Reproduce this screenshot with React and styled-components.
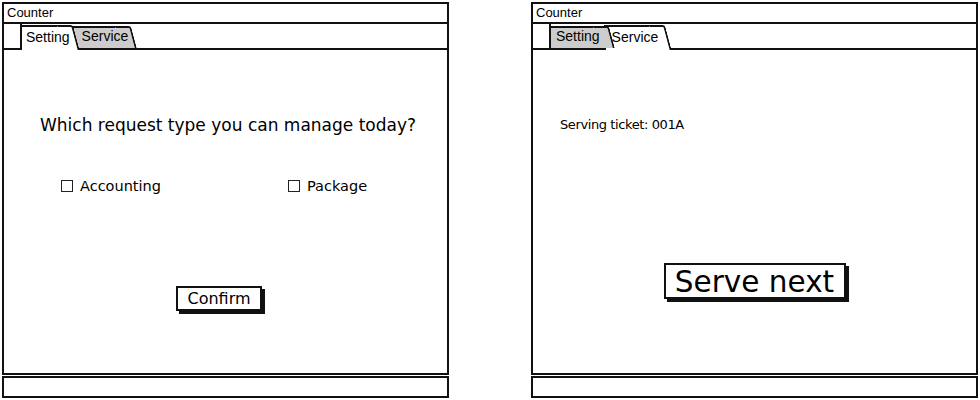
import styled, { createGlobalStyle } from "styled-components";

const GlobalStyle = createGlobalStyle`
  body {
    margin: 0;
    background: #fff;
    font-family: "Liberation Sans", Arial, sans-serif;
  }
`;

const Page = styled.div`
  width: 980px;
  height: 400px;
  box-sizing: border-box;
  padding: 2px 2px 0 2px;
  display: flex;
  justify-content: space-between;
`;

const Window = styled.div`
  width: 447px;
  display: flex;
  flex-direction: column;
`;

const Frame = styled.div`
  height: 373px;
  box-sizing: border-box;
  border: 2px solid #111;
  display: flex;
  flex-direction: column;
`;

const TitleBar = styled.div`
  height: 18px;
  border-bottom: 2px solid #111;
  padding-left: 3px;
  font: 13px/18px "Liberation Sans", Arial, sans-serif;
  color: #000;
`;

const TabStrip = styled.div`
  height: 26px;
  display: flex;
  align-items: flex-end;
  box-shadow: inset 0 -2px 0 #111;
`;

const BlankTab = styled.div`
  width: 16px;
  height: 24px;
  margin-bottom: 2px;
  border-right: 2px solid #111;
  background: #fff;
  position: relative;
  z-index: 5;
`;

const Tab = styled.div`
  position: relative;
  z-index: ${(p) => p.$z};
  box-sizing: border-box;
  height: ${(p) => (p.$active ? 25 : 22)}px;
  margin-bottom: ${(p) => (p.$active ? 0 : 2)}px;
  margin-left: -2px;
  padding: ${(p) => (p.$active ? "2px" : "0")} ${(p) => p.$pr}px 0 ${(p) => p.$pl}px;
  background: ${(p) => (p.$active ? "#fff" : "#cccccc")};
  border-top: 2px solid #111;
  border-left: 2px solid #111;
  font: 14px/17px "Liberation Sans", Arial, sans-serif;
  color: #000;

  &::after {
    content: "";
    position: absolute;
    top: -2px;
    bottom: 0;
    right: -3px;
    width: 14px;
    background: inherit;
    border-top: 2px solid #111;
    border-right: 2px solid #111;
    transform: skewX(15deg);
    transform-origin: top left;
    border-top-right-radius: 3px;
  }

  & > span {
    position: relative;
    z-index: 1;
  }
`;

const Content = styled.div`
  flex: 1;
  display: flex;
  flex-direction: column;
  align-items: ${(p) => (p.$center ? "center" : "flex-start")};
  padding-top: 65px;
  font-family: "DejaVu Sans", sans-serif;
  color: #000;
`;

const Question = styled.div`
  margin-left: 36px;
  font-size: 17px;
  line-height: 20px;
`;

const CheckRow = styled.div`
  margin-top: 41px;
  margin-left: 57px;
  display: grid;
  grid-template-columns: 227px auto;
`;

const Check = styled.label`
  display: flex;
  align-items: center;
  gap: 7px;
  font-size: 14.5px;
  line-height: 20px;
`;

const Box = styled.span`
  width: 10px;
  height: 10px;
  border: 1px solid #222;
  background: #fff;
`;

const Button = styled.button`
  margin-top: ${(p) => p.$top}px;
  margin-left: ${(p) => p.$left || 0}px;
  width: ${(p) => p.$w}px;
  height: ${(p) => p.$h}px;
  padding: 0;
  background: #fff;
  border: 2px solid #111;
  box-shadow: 3px 3px 0 #111;
  font-family: "DejaVu Sans", sans-serif;
  font-size: ${(p) => p.$size}px;
  color: #000;
`;

const Ticket = styled.div`
  align-self: flex-start;
  margin-left: 27px;
  font-size: 13px;
  letter-spacing: -0.4px;
  line-height: 20px;
`;

const StatusBar = styled.div`
  margin-top: 1px;
  height: 22px;
  box-sizing: border-box;
  border: 2px solid #111;
`;

const TabBar = ({ active }) => (
  <TabStrip>
    <BlankTab />
    <Tab $active={active === "Setting"} $z={4} $pl={active === "Setting" ? 4 : 5} $pr={active === "Setting" ? 0 : 6}>
      <span>Setting</span>
    </Tab>
    <Tab $active={active === "Service"} $z={3} $pl={active === "Service" ? 6 : 12} $pr={active === "Service" ? 4 : 0}>
      <span>Service</span>
    </Tab>
  </TabStrip>
);

export default function App() {
  return (
    <>
      <GlobalStyle />
      <Page>
        <Window>
          <Frame>
            <TitleBar>Counter</TitleBar>
            <TabBar active="Setting" />
            <Content>
              <Question>Which request type you can manage today?</Question>
              <CheckRow>
                <Check>
                  <Box />
                  Accounting
                </Check>
                <Check>
                  <Box />
                  Package
                </Check>
              </CheckRow>
              <Button $top={90} $left={172} $w={86} $h={25} $size={16}>
                Confirm
              </Button>
            </Content>
          </Frame>
          <StatusBar />
        </Window>
        <Window>
          <Frame>
            <TitleBar>Counter</TitleBar>
            <TabBar active="Service" />
            <Content $center>
              <Ticket>Serving ticket: 001A</Ticket>
              <Button $top={128} $w={182} $h={36} $size={29.5}>
                Serve next
              </Button>
            </Content>
          </Frame>
          <StatusBar />
        </Window>
      </Page>
    </>
  );
}
